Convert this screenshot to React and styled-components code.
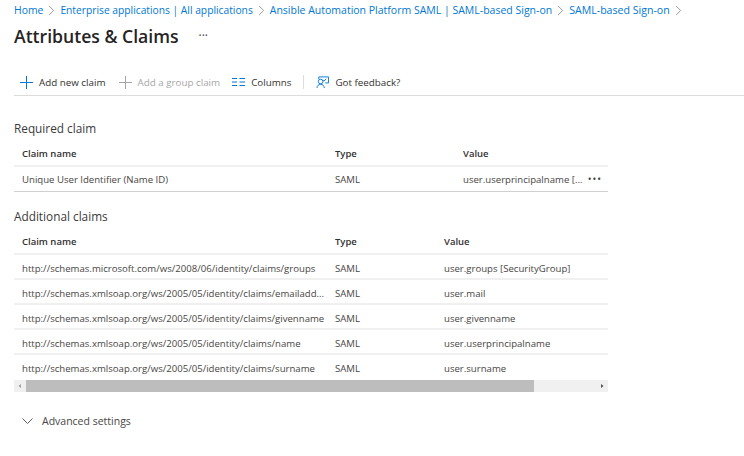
import React from "react";
import styled, { createGlobalStyle } from "styled-components";
import { ChevronRight } from "lucide-react";

const GlobalStyle = createGlobalStyle`
  html, body {
    margin: 0;
    background: #fff;
    font-family: "Open Sans", "Noto Sans", sans-serif;
    font-size: 9.6px;
    color: #323130;
  }
`;

const Page = styled.div`
  width: 744px;
  height: 456px;
  overflow: hidden;
  box-sizing: border-box;
  padding-left: 14px;
`;
const Breadcrumbs = styled.nav`
  display: flex;
  align-items: center;
  height: 20px;
  white-space: nowrap;
`;
const Crumb = styled.a`
  color: #0078d4;
  font-size: ${(p) => p.$size}px;
`;
const Separator = styled.span`
  display: flex;
  justify-content: center;
  width: 17px;
  color: #8a8886;
`;
const TitleRow = styled.div`
  display: flex;
  align-items: center;
  height: 32px;
`;
const Title = styled.h1`
  margin: 0;
  font-size: 17.6px;
  font-weight: 600;
  color: #252423;
`;
const TitleMore = styled.span`
  margin-left: 20px;
  font-size: 12px;
  line-height: 8px;
  color: #444;
`;
const Toolbar = styled.div`
  display: flex;
  align-items: center;
  height: 26px;
  padding-top: 17px;
  border-bottom: 1px solid #dcdcdc;
`;
const ToolButton = styled.div`
  display: flex;
  align-items: center;
  gap: 6px;
  margin-left: ${(p) => p.$left || 0}px;
  font-size: 9.8px;
  color: ${(p) => (p.$disabled ? "#a6a6a6" : "#323130")};
  white-space: nowrap;
`;
const ToolDivider = styled.span`
  width: 1px;
  height: 14px;
  background: #dcdcdc;
  margin: 0 12px;
`;
const SectionTitle = styled.h2`
  margin: 0;
  font-size: 11.8px;
  font-weight: 400;
  line-height: 16px;
  color: #3b3a39;
  padding-top: ${(p) => p.$top}px;
`;
const Table = styled.div`
  width: 594px;
`;
const Row = styled.div`
  display: grid;
  grid-template-columns: ${(p) => p.$cols};
  align-items: center;
  height: 25px;
  padding: ${(p) => p.$pad || 3}px 0 0 8px;
  box-sizing: border-box;
  border-bottom: ${(p) => p.$line || "2px solid #f0f0f0"};
  position: relative;
`;
const HeadRow = styled(Row)`
  height: 31px;
  padding-top: 5px;
`;
const HeadCell = styled.div`
  font-size: 9.5px;
  font-weight: 600;
  color: #323130;
`;
const Cell = styled.div`
  color: #484644;
  white-space: nowrap;
`;
const RowMore = styled.span`
  position: absolute;
  right: 6px;
  top: 7px;
  font-size: 10px;
  line-height: 10px;
  letter-spacing: 1px;
  color: #3b3a39;
`;
const ScrollBar = styled.div`
  display: flex;
  align-items: center;
  height: 12px;
  background: #f0f0f0;
`;
const ScrollArrow = styled.svg`
  width: 12px;
  height: 12px;
  flex: none;
`;
const ScrollTrack = styled.div`
  flex: 1;
  height: 100%;
`;
const ScrollThumb = styled.div`
  width: 508px;
  height: 100%;
  background: #bdbdbd;
`;
const Advanced = styled.div`
  display: flex;
  align-items: center;
  gap: 9px;
  margin-top: 21px;
  padding-left: 8px;
  height: 16px;
  color: #484644;
  font-size: 10.5px;
`;

const crumbs = [
  { label: "Home", size: 10.4 },
  { label: "Enterprise applications | All applications", size: 10.26 },
  { label: "Ansible Automation Platform SAML | SAML-based Sign-on", size: 10.5 },
  { label: "SAML-based Sign-on", size: 10.6 },
];

const claims = [
  ["http://schemas.microsoft.com/ws/2008/06/identity/claims/groups", "user.groups [SecurityGroup]"],
  ["http://schemas.xmlsoap.org/ws/2005/05/identity/claims/emailadd...", "user.mail"],
  ["http://schemas.xmlsoap.org/ws/2005/05/identity/claims/givenname", "user.givenname"],
  ["http://schemas.xmlsoap.org/ws/2005/05/identity/claims/name", "user.userprincipalname"],
  ["http://schemas.xmlsoap.org/ws/2005/05/identity/claims/surname", "user.surname"],
];

const PlusIcon = ({ color }) => (
  <svg width="13" height="13" viewBox="0 0 13 13" fill="none" stroke={color} strokeWidth="1">
    <path d="M6.500 0v13M0 6.500h13" />
  </svg>
);

const ColumnsIcon = () => (
  <svg width="13" height="10" viewBox="0 0 13 10" fill="none" stroke="#0078d4" strokeWidth="1">
    <path d="M0 1.500h5M0 5h5M0 8.500h5M7.500 1.500h5.500M7.500 5h5.500M7.500 8.500h5.500" />
  </svg>
);

const FeedbackIcon = () => (
  <svg width="13" height="14" viewBox="0 0 14 14" fill="none" stroke="#0078d4" strokeWidth="1">
    <path d="M3 4V1.500h10.500v6.500H10" />
    <path d="M7.500 5l1 1 2.500-2.500" />
    <circle cx="5" cy="6.500" r="2.500" />
    <path d="M1 13.500c.3-2.600 1.800-4 4-4s3.700 1.400 4 4" />
  </svg>
);

const DownChevron = () => (
  <svg width="11" height="6" viewBox="0 0 11 6" fill="none" stroke="#605e5c" strokeWidth="1">
    <path d="M.5.500l5 5 5-5" />
  </svg>
);

const REQUIRED_COLS = "313px 128px 1fr";
const ADDITIONAL_COLS = "313px 109px 1fr";

const App = () => {
  return (
    <Page>
      <GlobalStyle />
      <Breadcrumbs>
        {crumbs.map((c) => (
          <React.Fragment key={c.label}>
            <Crumb $size={c.size}>{c.label}</Crumb>
            <Separator>
              <ChevronRight size={17} strokeWidth={1.2} />
            </Separator>
          </React.Fragment>
        ))}
      </Breadcrumbs>
      <TitleRow>
        <Title>Attributes &amp; Claims</Title>
        <TitleMore>···</TitleMore>
      </TitleRow>
      <Toolbar>
        <ToolButton $left={6}>
          <PlusIcon color="#0078d4" />
          Add new claim
        </ToolButton>
        <ToolButton $left={13} $disabled>
          <PlusIcon color="#a6a6a6" />
          Add a group claim
        </ToolButton>
        <ToolButton $left={12}>
          <ColumnsIcon />
          Columns
        </ToolButton>
        <ToolDivider />
        <ToolButton>
          <FeedbackIcon />
          Got feedback?
        </ToolButton>
      </Toolbar>
      <SectionTitle $top={24}>Required claim</SectionTitle>
      <Table>
        <HeadRow $cols={REQUIRED_COLS}>
          <HeadCell>Claim name</HeadCell>
          <HeadCell>Type</HeadCell>
          <HeadCell>Value</HeadCell>
        </HeadRow>
        <Row $cols={REQUIRED_COLS} $pad={1} $line="1px solid #d0d0d0">
          <Cell>Unique User Identifier (Name ID)</Cell>
          <Cell>SAML</Cell>
          <Cell>user.userprincipalname [...</Cell>
          <RowMore>•••</RowMore>
        </Row>
      </Table>
      <SectionTitle $top={16}>Additional claims</SectionTitle>
      <Table>
        <HeadRow $cols={ADDITIONAL_COLS}>
          <HeadCell>Claim name</HeadCell>
          <HeadCell>Type</HeadCell>
          <HeadCell>Value</HeadCell>
        </HeadRow>
        {claims.map(([name, value], i) => (
          <Row key={name} $cols={ADDITIONAL_COLS} $line={i === claims.length - 1 ? "2px solid transparent" : undefined}>
            <Cell>{name}</Cell>
            <Cell>SAML</Cell>
            <Cell>{value}</Cell>
          </Row>
        ))}
        <ScrollBar>
          <ScrollArrow viewBox="0 0 12 12">
            <path d="M7 4v4L4.500 6z" fill="#a0a0a0" />
          </ScrollArrow>
          <ScrollTrack>
            <ScrollThumb />
          </ScrollTrack>
          <ScrollArrow viewBox="0 0 12 12">
            <path d="M5 4v4l2.500-2z" fill="#505050" />
          </ScrollArrow>
        </ScrollBar>
      </Table>
      <Advanced>
        <DownChevron />
        Advanced settings
      </Advanced>
    </Page>
  );
};

export default App;
